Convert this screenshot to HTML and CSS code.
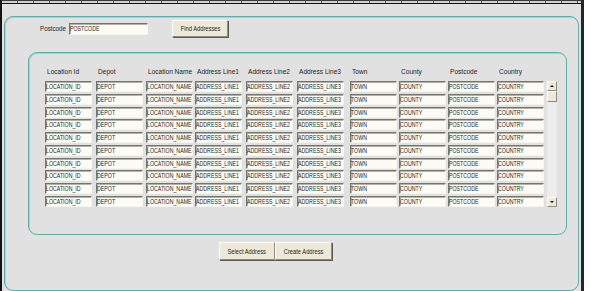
FILE: index.html
```html
<!DOCTYPE html>
<html lang="en">
<head>
  <meta charset="UTF-8">
  <title>Address Search</title>
  <link rel="stylesheet" href="styles.css">
</head>
<body>
  <div class="window">
    <!-- Ruler strip along the top -->
    <div class="titlebar"></div>

    <div class="frame">
      <!-- Search -->
      <div class="search">
        <span class="search-label"><span class="txt">Postcode</span></span>
        <div class="field search-field"><span class="txt">POSTCODE</span></div>
        <button class="btn find-btn"><span class="txt">Find Addresses</span></button>
      </div>

      <!-- Results -->
      <div class="results">
        <div class="cols heads">
          <span><span class="txt">Location Id</span></span>
          <span><span class="txt">Depot</span></span>
          <span><span class="txt">Location Name</span></span>
          <span><span class="txt">Address Line1</span></span>
          <span><span class="txt">Address Line2</span></span>
          <span><span class="txt">Address Line3</span></span>
          <span><span class="txt">Town</span></span>
          <span><span class="txt">County</span></span>
          <span><span class="txt">Postcode</span></span>
          <span><span class="txt">Country</span></span>
        </div>
        <div class="list">
          <div id="rows" class="cols rows"></div>
          <div class="scrollbar">
            <div class="arrow"><span class="tri up"></span></div>
            <div class="thumb"></div>
            <div class="track"></div>
            <div class="arrow"><span class="tri down"></span></div>
          </div>
        </div>
      </div>

      <!-- Actions -->
      <div class="actions">
        <button class="btn select-btn"><span class="txt">Select Address</span></button>
        <button class="btn create-btn"><span class="txt">Create Address</span></button>
      </div>
    </div>
  </div>

  <script>
    const fields = ["LOCATION_ID", "DEPOT", "LOCATION_NAME", "ADDRESS_LINE1", "ADDRESS_LINE2",
                    "ADDRESS_LINE3", "TOWN", "COUNTY", "POSTCODE", "COUNTRY"];
    const rows = document.getElementById("rows");

    // Build the result rows
    for (let i = 0; i < 10; i++) {
      fields.forEach(name => {
        const cell = document.createElement("div");
        cell.className = "field cell";
        cell.innerHTML = `<span class="txt">${name}</span>`;
        rows.appendChild(cell);
      });
    }
  </script>
</body>
</html>
```

FILE: styles.css
```css
/* Global */
body {
  margin: 0;
  background: #ffffff;
  font-family: "Liberation Sans", Arial, sans-serif;
  color: #1e1e1e;
}

/* Narrow look of the old toolkit font */
.txt {
  display: inline-block;
  white-space: nowrap;
  transform: scaleX(0.8);
  transform-origin: left center;
}

.window {
  box-sizing: border-box;
  width: 584px;
  height: 291px;
  overflow: hidden;
  background: #e1e1e1;
  border-left: 2px solid #141414;
  border-right: 3px solid #262626;
}

.titlebar {
  box-sizing: border-box;
  height: 4px;
  border-top: 1px solid #3a3a3a;
  border-bottom: 1px solid #141414;
  background: repeating-linear-gradient(90deg, #cfcfcf 0, #cfcfcf 15px, #555 15px, #555 16px);
}

/* Outer panel */
.frame {
  box-sizing: border-box;
  height: 275px;
  margin: 12px 2px 0 2px;
  padding-top: 3px;
  border: 1px solid #62abab;
  border-radius: 9px;
  box-shadow: inset 1px 1px 0 #a9d2d2;
}

/* Search row */
.search {
  display: flex;
  align-items: center;
  height: 17px;
}

.search-label {
  width: 29px;
  margin-left: 35px;
  font-size: 8px;
}

.search-label .txt {
  transform: scaleX(0.78);
}

.field {
  box-sizing: border-box;
  overflow: hidden;
  background: #fcfcf5;
  border: 1px solid;
  border-color: #76756d #f4f4f0 #f4f4f0 #76756d;
  box-shadow: inset 1px 1px 0 #b3b2a8;
  font-size: 7.5px;
}

.field .txt {
  transform: scaleX(0.7);
}

.search-field {
  width: 79px;
  height: 12px;
  line-height: 10px;
}

.btn {
  box-sizing: border-box;
  margin: 0;
  padding: 0;
  background: #ece9d8;
  border: 1px solid;
  border-color: #ffffff #8d8b80 #8d8b80 #ffffff;
  box-shadow: 1px 1px 0 #5c5b55;
  font-family: inherit;
  font-size: 8px;
  color: #1e1e1e;
  white-space: nowrap;
}

.btn .txt {
  transform: scaleX(0.72);
  transform-origin: center;
}

.find-btn {
  width: 56px;
  height: 17px;
  margin-left: 24px;
}

/* Results panel */
.results {
  box-sizing: border-box;
  height: 183px;
  margin: 15px 11px 0 23px;
  padding: 13px 0 0 16px;
  border: 1px solid #62abab;
  border-radius: 9px;
  box-shadow: inset 1px 1px 0 #a9d2d2;
}

.cols {
  display: grid;
  grid-template-columns: 51px 50px 49px 51px 51px 53px 49px 49px 49px 50px;
}

.heads {
  height: 12px;
  line-height: 12px;
  font-size: 8px;
}

.heads > span {
  padding-left: 2px;
  white-space: nowrap;
}

.heads .txt {
  transform: scaleX(0.82);
}

.list {
  display: flex;
  margin-top: 3px;
}

.rows {
  grid-auto-rows: 11px;
  row-gap: 1.75px;
}

.cell {
  width: 47px;
  height: 11px;
  line-height: 9px;
}

/* Scrollbar */
.scrollbar {
  display: flex;
  flex-direction: column;
  width: 10px;
  background: #ececec;
}

.arrow,
.thumb {
  box-sizing: border-box;
  display: flex;
  align-items: center;
  justify-content: center;
  background: #ece9d8;
  border: 1px solid;
  border-color: #ffffff #8d8b80 #8d8b80 #ffffff;
}

.arrow {
  height: 10px;
}

.thumb {
  height: 11px;
}

.track {
  flex: 1;
}

.tri {
  width: 0;
  height: 0;
  border-left: 2px solid transparent;
  border-right: 2px solid transparent;
}

.tri.up {
  border-bottom: 2px solid #111;
}

.tri.down {
  border-top: 2px solid #111;
}

/* Bottom buttons */
.actions {
  display: flex;
  margin-top: 7px;
  padding-left: 214px;
}

.select-btn {
  width: 56px;
  height: 18px;
}

.create-btn {
  width: 57px;
  height: 18px;
}
```
